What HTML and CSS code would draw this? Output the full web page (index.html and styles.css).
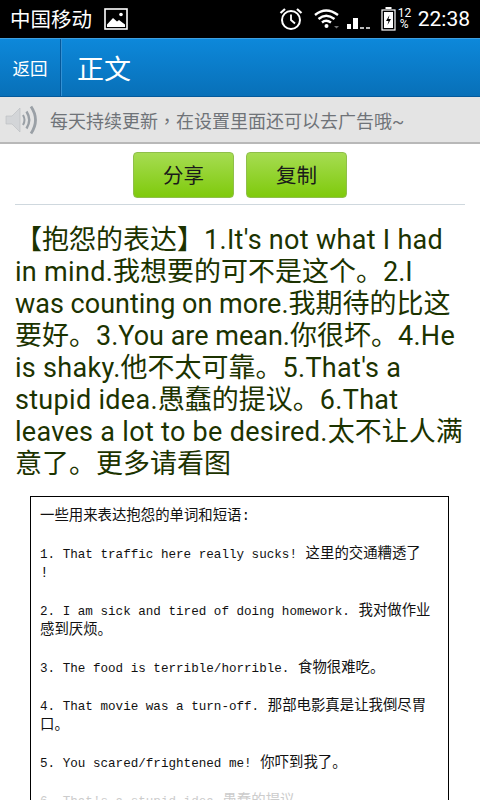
FILE: index.html
```html
<!DOCTYPE html>
<html>
  <head>
    <meta charset="utf-8">
    <title>正文</title>
    <link rel="stylesheet" href="styles.css">
  </head>
  <body>
    <div id="status">
      <div class="carrier">中国移动</div>
      <svg class="pic" width="24" height="22" viewBox="0 0 24 22">
        <rect x="1" y="1" width="22" height="20" fill="none" stroke="#fff" stroke-width="1.6"/>
        <circle cx="17" cy="6.5" r="1.8" fill="#fff"/>
        <path d="M3 19 L3 16.500 L9 10 L13 13.500 L15 12 L21 16.500 L21 19 Z" fill="#fff"/>
      </svg>
      <div class="spacer"></div>
      <svg class="alarm" width="24" height="24" viewBox="0 0 24 24">
        <circle cx="12" cy="13" r="9" fill="none" stroke="#fff" stroke-width="2"/>
        <path d="M12 7.5 V13 L16 16.5" fill="none" stroke="#fff" stroke-width="1.8"/>
        <path d="M1.5 6 L6 2 M22.500 6 L18 2" stroke="#fff" stroke-width="2.2"/>
      </svg>
      <svg class="wifi" width="26" height="22" viewBox="0 0 26 22">
        <path d="M1 7 Q12 -2 24 7 M4.500 11 Q12 4.500 20.500 11 M8 14.500 Q12 11 17 14.500" fill="none" stroke="#fff" stroke-width="2.4"/>
        <circle cx="12.500" cy="18" r="2" fill="#fff"/>
        <path d="M20 18 h5 l-2.500 2.500 Z" fill="#777"/>
      </svg>
      <svg class="signal" width="23" height="12" viewBox="0 0 23 12">
        <rect x="0" y="7" width="4" height="5" fill="#fff"/>
        <rect x="6" y="1" width="5" height="11" fill="#fff"/>
        <rect x="13" y="10" width="4" height="2" fill="#bbb"/>
        <rect x="19" y="10" width="4" height="2" fill="#bbb"/>
      </svg>
      <svg class="batt" width="15" height="24" viewBox="0 0 15 24">
        <rect x="4.500" y="0" width="6" height="2" fill="#fff"/>
        <rect x="1" y="3" width="13" height="20" fill="none" stroke="#fff" stroke-width="1.200"/>
        <rect x="3" y="5" width="9" height="16" fill="#fff"/>
        <path d="M8.500 8 L5 14 H7.500 L6.500 18 L10 12 H7.500 Z" fill="#000"/>
      </svg>
      <div class="pct"><span>12</span><span>%</span></div>
      <div class="clock">22:38</div>
    </div>

    <div id="header">
      <div class="back">返回</div>
      <div class="title">正文</div>
    </div>

    <div id="notice">
      <svg class="speaker" width="34" height="30" viewBox="0 0 34 30">
        <path d="M1 11 H7 L15 3 V27 L7 19 H1 Z" fill="#d3d5d8" stroke="#b9bcc0" stroke-width="0.600"/>
        <path d="M18 10 Q21 15 18 20" fill="none" stroke="#9aa0a6" stroke-width="2"/>
        <path d="M21.500 6.500 Q27 15 21.500 23.500" fill="none" stroke="#9aa0a6" stroke-width="2.400"/>
        <path d="M26 1.500 Q35 15 26 28.500" fill="none" stroke="#9aa0a6" stroke-width="2.800"/>
      </svg>
      <div class="msg">每天持续更新<span class="comma">，</span>在设置里面还可以去广告哦~</div>
    </div>

    <div id="btns">
      <div class="btn">分享</div>
      <div class="btn">复制</div>
    </div>
    <div class="rule"></div>

    <div id="body-text">【抱怨的表达】<span class="la">1.It's not what I had in mind.</span>我想要的可不是这个。<span class="la tight">2.I was counting on more.</span>我期待的比这要好。<span class="la tight">3.You are mean.</span>你很坏。<span class="la">4.He is shaky.</span>他不太可靠。<span class="la">5.That's a stupid idea.</span>愚蠢的提议。<span class="la">6.That leaves a lot to be desired.</span>太不让人满意了。更多请看图</div>

    <div id="pic-box">
      <p>一些用来表达抱怨的单词和短语:</p>
      <p><span class="en">1. That traffic here really sucks!</span> 这里的交通糟透了<br>!</p>
      <p><span class="en">2. I am sick and tired of doing homework.</span> 我对做作业<br>感到厌烦。</p>
      <p><span class="en">3. The food is terrible/horrible.</span> 食物很难吃。</p>
      <p><span class="en">4. That movie was a turn-off.</span> 那部电影真是让我倒尽胃<br>口。</p>
      <p><span class="en">5. You scared/frightened me!</span> 你吓到我了。</p>
      <p class="faded"><span class="en">6. That's a stupid idea</span> 愚蠢的提议</p>
    </div>
  </body>
</html>
```

FILE: styles.css
```css
html, body {
  margin: 0;
  padding: 0;
}
body {
  width: 480px;
  height: 800px;
  overflow: hidden;
  background: #fff;
  font-family: Roboto, "Noto Sans CJK SC", sans-serif;
}
#status {
  height: 38px;
  background: #000;
  color: #fff;
  display: flex;
  align-items: center;
  padding: 0 10px 0 10px;
}
.carrier {
  font-size: 20.500px;
  margin-right: 12px;
  padding-bottom: 2px;
}
.pic {
  display: block;
}
.spacer {
  flex: 1;
}
.alarm {
  margin-right: 11px;
}
.wifi {
  margin-right: 7px;
}
.signal {
  margin: 8px 11px 0 0;
}
.batt {
  margin-right: 2px;
}
.pct {
  display: flex;
  flex-direction: column;
  font-size: 12px;
  line-height: 11px;
  text-align: center;
  width: 13px;
  margin-right: 7px;
}
.clock {
  font-size: 21px;
}
#header {
  height: 59px;
  box-sizing: border-box;
  border-top: 1px solid #3f9fe0;
  border-bottom: 1px solid #045a9c;
  background: linear-gradient(#0d88da, #0870b8);
  color: #fff;
  display: flex;
  align-items: center;
}
.back {
  width: 61px;
  height: 100%;
  box-sizing: border-box;
  border-right: 1px solid #05589a;
  box-shadow: 1px 0 0 #3491d4;
  display: flex;
  align-items: center;
  justify-content: center;
  font-size: 17.500px;
}
.title {
  margin-left: 16px;
  font-size: 27px;
}
#notice {
  height: 47px;
  box-sizing: border-box;
  background: #e4e4e4;
  border-bottom: 2px solid #b8b8b8;
  display: flex;
  align-items: center;
  padding-left: 5px;
  color: #6f7378;
}
.msg {
  margin-left: 11px;
  font-size: 18px;
  padding-top: 1px;
}
.comma {
  font-family: "Noto Sans CJK TC", sans-serif;
}
#btns {
  display: flex;
  justify-content: center;
  gap: 12px;
  margin-top: 8px;
}
.btn {
  width: 101px;
  height: 46px;
  box-sizing: border-box;
  border: 1px solid #8fbf4a;
  border-radius: 4px;
  background: linear-gradient(#a6dc52, #7fca0c);
  display: flex;
  align-items: center;
  justify-content: center;
  padding-bottom: 2px;
  font-size: 20.500px;
  color: #1a1a1a;
}
.rule {
  height: 1px;
  background: #cfd8de;
  margin: 6px 15px 0 15px;
}
#body-text {
  margin: 19px 15px 0 15px;
  font-size: 27px;
  line-height: 32px;
  color: #1c3300;
}
.la {
  letter-spacing: 0.300px;
}
.la.tight {
  letter-spacing: 0;
}
#pic-box {
  margin: 16px 31px 0 30px;
  border: 1px solid #000;
  padding: 10px 9px 0 9px;
  font-family: "Liberation Mono", "Noto Sans CJK SC", monospace;
  font-size: 14.400px;
  line-height: 19px;
  color: #111;
  height: 400px;
}
#pic-box p {
  margin: 0 0 19px 0;
}
#pic-box .en {
  font-size: 12.600px;
  line-height: 1;
}
.faded {
  color: #ccc;
}
```
